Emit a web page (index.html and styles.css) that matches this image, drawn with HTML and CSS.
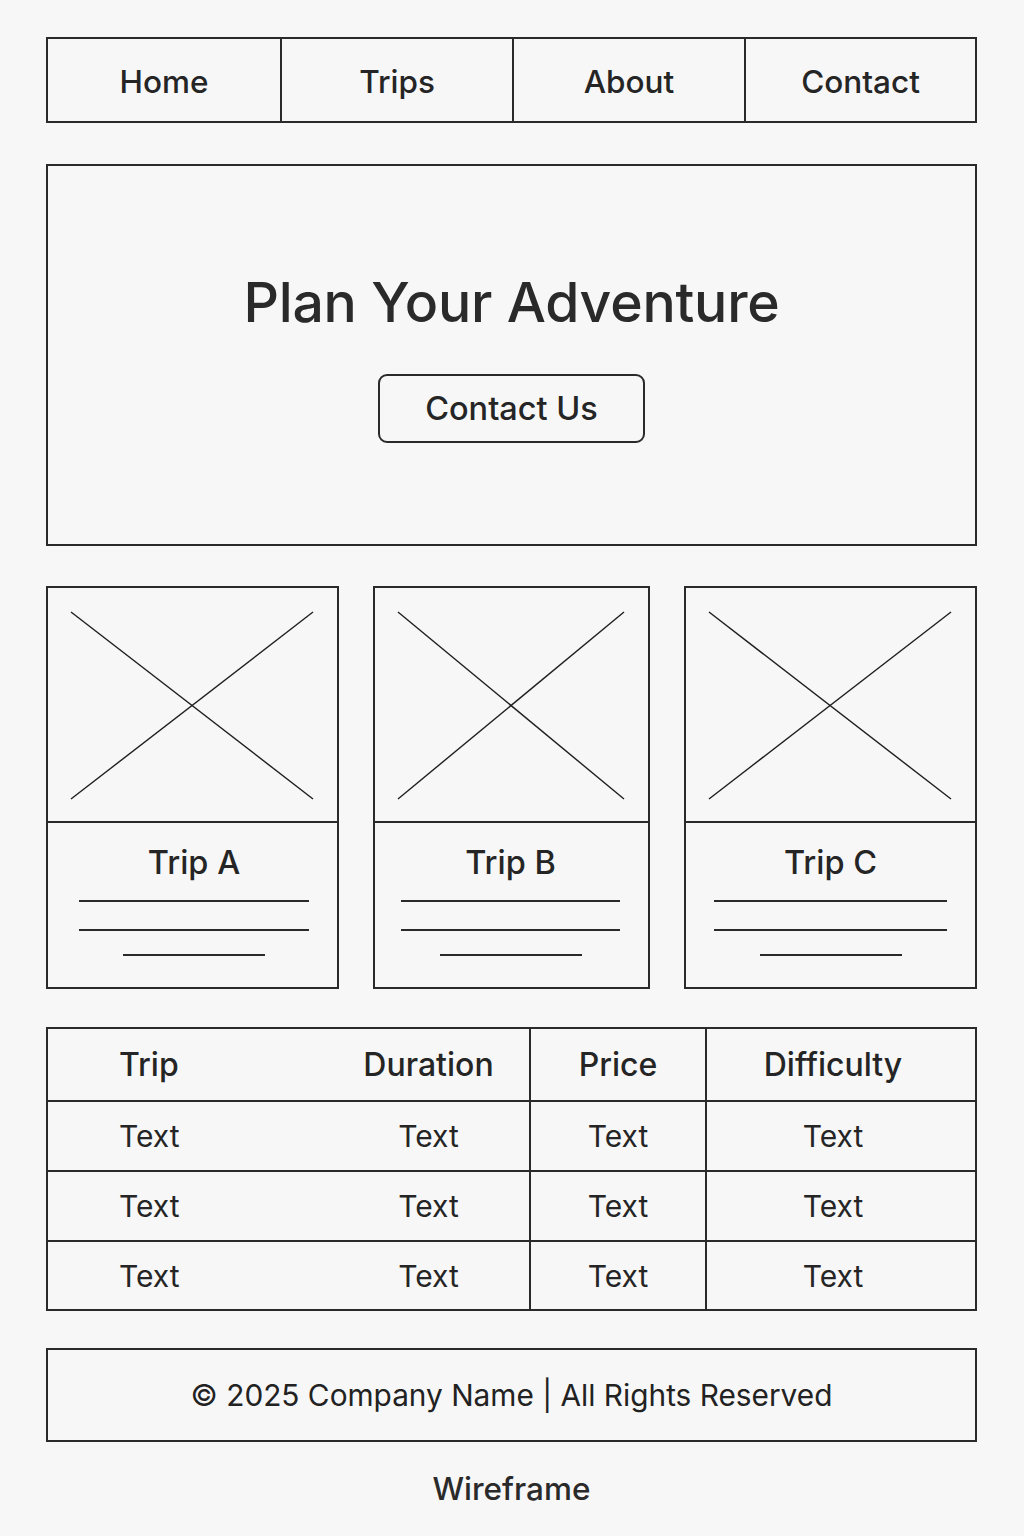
FILE: index.html
```html
<!DOCTYPE html>
<html lang="en">
<head>
<meta charset="utf-8">
<title>Wireframe</title>
<link rel="stylesheet" href="styles.css">
</head>
<body>
<div class="page">
  <nav class="nav">
    <a class="nav-item">Home</a>
    <a class="nav-item">Trips</a>
    <a class="nav-item">About</a>
    <a class="nav-item">Contact</a>
  </nav>

  <section class="hero">
    <h1 class="hero-title">Plan Your Adventure</h1>
    <button class="hero-btn">Contact Us</button>
  </section>

  <section class="cards">
    <div class="card">
      <div class="card-img">
        <svg viewBox="0 0 100 100" preserveAspectRatio="none"><line x1="0" y1="0" x2="100" y2="100"/><line x1="100" y1="0" x2="0" y2="100"/></svg>
      </div>
      <div class="card-body">
        <div class="card-title">Trip A</div>
        <div class="line"></div>
        <div class="line"></div>
        <div class="line short"></div>
      </div>
    </div>
    <div class="card">
      <div class="card-img">
        <svg viewBox="0 0 100 100" preserveAspectRatio="none"><line x1="0" y1="0" x2="100" y2="100"/><line x1="100" y1="0" x2="0" y2="100"/></svg>
      </div>
      <div class="card-body">
        <div class="card-title">Trip B</div>
        <div class="line"></div>
        <div class="line"></div>
        <div class="line short"></div>
      </div>
    </div>
    <div class="card">
      <div class="card-img">
        <svg viewBox="0 0 100 100" preserveAspectRatio="none"><line x1="0" y1="0" x2="100" y2="100"/><line x1="100" y1="0" x2="0" y2="100"/></svg>
      </div>
      <div class="card-body">
        <div class="card-title">Trip C</div>
        <div class="line"></div>
        <div class="line"></div>
        <div class="line short"></div>
      </div>
    </div>
  </section>

  <table class="trips">
    <thead>
      <tr><th class="c1">Trip</th><th class="c2">Duration</th><th class="c3">Price</th><th class="c4">Difficulty</th></tr>
    </thead>
    <tbody>
      <tr><td class="c1">Text</td><td class="c2">Text</td><td class="c3">Text</td><td class="c4">Text</td></tr>
      <tr><td class="c1">Text</td><td class="c2">Text</td><td class="c3">Text</td><td class="c4">Text</td></tr>
      <tr class="last"><td class="c1">Text</td><td class="c2">Text</td><td class="c3">Text</td><td class="c4">Text</td></tr>
    </tbody>
  </table>

  <footer class="footer">© 2025 Company Name | All Rights Reserved</footer>

  <div class="caption">Wireframe</div>
</div>
</body>
</html>
```

FILE: styles.css
```css
* { box-sizing: border-box; }

html, body {
  margin: 0;
  padding: 0;
  background: #f7f7f7;
}

body {
  font-family: Inter, "Noto Sans", "Liberation Sans", sans-serif;
  color: #252525;
}

.page {
  width: 931px;
  margin-left: 46px;
  padding-top: 37px;
  display: flex;
  flex-direction: column;
}

/* NAV */
.nav {
  display: grid;
  grid-template-columns: 232px 232px 232px 1fr;
  height: 86px;
  border: 2px solid #2a2a2a;
}
.nav-item {
  display: flex;
  align-items: center;
  justify-content: center;
  font-size: 31.5px;
  font-weight: 500;
  color: #252525;
  border-left: 2px solid #2a2a2a;
  padding-top: 2px;
}
.nav-item:first-child { border-left: none; }

/* HERO */
.hero {
  margin-top: 41px;
  height: 382px;
  border: 2px solid #2a2a2a;
  display: flex;
  flex-direction: column;
  align-items: center;
  padding-top: 101px;
}
.hero-title {
  margin: 0;
  font-size: 55.3px;
  font-weight: 500;
  line-height: 70px;
  color: #2a2a2a;
  letter-spacing: -0.2px;
}
.hero-btn {
  margin-top: 37px;
  width: 267px;
  height: 69px;
  border: 2px solid #2a2a2a;
  border-radius: 9px;
  background: transparent;
  font-family: inherit;
  font-size: 32.5px;
  font-weight: 500;
  color: #252525;
  padding: 0;
}

/* CARDS */
.cards {
  margin-top: 40px;
  display: grid;
  grid-template-columns: 293px 277px 293px;
  column-gap: 34px;
}
.card {
  height: 403px;
  border: 2px solid #2a2a2a;
  display: flex;
  flex-direction: column;
}
.card-img {
  height: 235px;
  border-bottom: 2px solid #2a2a2a;
  padding: 24px 24px 22px 23px;
}
.card-img svg {
  display: block;
  width: 100%;
  height: 100%;
  overflow: visible;
}
.card-img line {
  stroke: #1f1f1f;
  stroke-width: 1.4;
  vector-effect: non-scaling-stroke;
}
.card-body {
  flex: 1;
  display: flex;
  flex-direction: column;
  align-items: center;
  padding: 19px 28px 0 28px;
}
.card:first-child .card-body { padding-left: 31px; }
.card:nth-child(2) .card-body { padding-left: 26px; }
.card-title {
  font-size: 32.5px;
  font-weight: 500;
  line-height: 42px;
  color: #252525;
}
.line {
  width: 100%;
  height: 2px;
  background: #2a2a2a;
  margin-top: 16px;
}
.line + .line { margin-top: 27px; }
.line.short {
  width: 142px;
  margin-top: 23px;
}

/* TABLE */
.trips {
  margin-top: 38px;
  width: 929px;
  border-collapse: collapse;
  border: 2px solid #2a2a2a;
  table-layout: fixed;
}
.trips th, .trips td {
  border: 2px solid #2a2a2a;
  font-size: 30px;
  color: #252525;
  padding: 0;
  text-align: center;
}
.trips th {
  height: 73px;
  font-size: 32px;
  font-weight: 500;
}
.trips td {
  height: 70px;
  font-weight: 400;
}
.trips tr.last td { height: 69px; }
.trips .c1 {
  width: 281px;
  text-align: left;
  padding-left: 71px;
  border-right: none;
}
.trips .c2 {
  width: 202px;
  border-left: none;
}
.trips .c3 { width: 176px; }
.trips .c4 { width: 270px; padding-right: 16px; }

/* FOOTER */
.footer {
  margin-top: 37px;
  height: 94px;
  border: 2px solid #2a2a2a;
  display: flex;
  align-items: center;
  justify-content: center;
  font-size: 29.8px;
  font-weight: 400;
  color: #222;
}

.caption {
  margin-top: 27px;
  text-align: center;
  font-size: 31.5px;
  font-weight: 500;
  color: #2a2a2a;
  line-height: 40px;
}
```
